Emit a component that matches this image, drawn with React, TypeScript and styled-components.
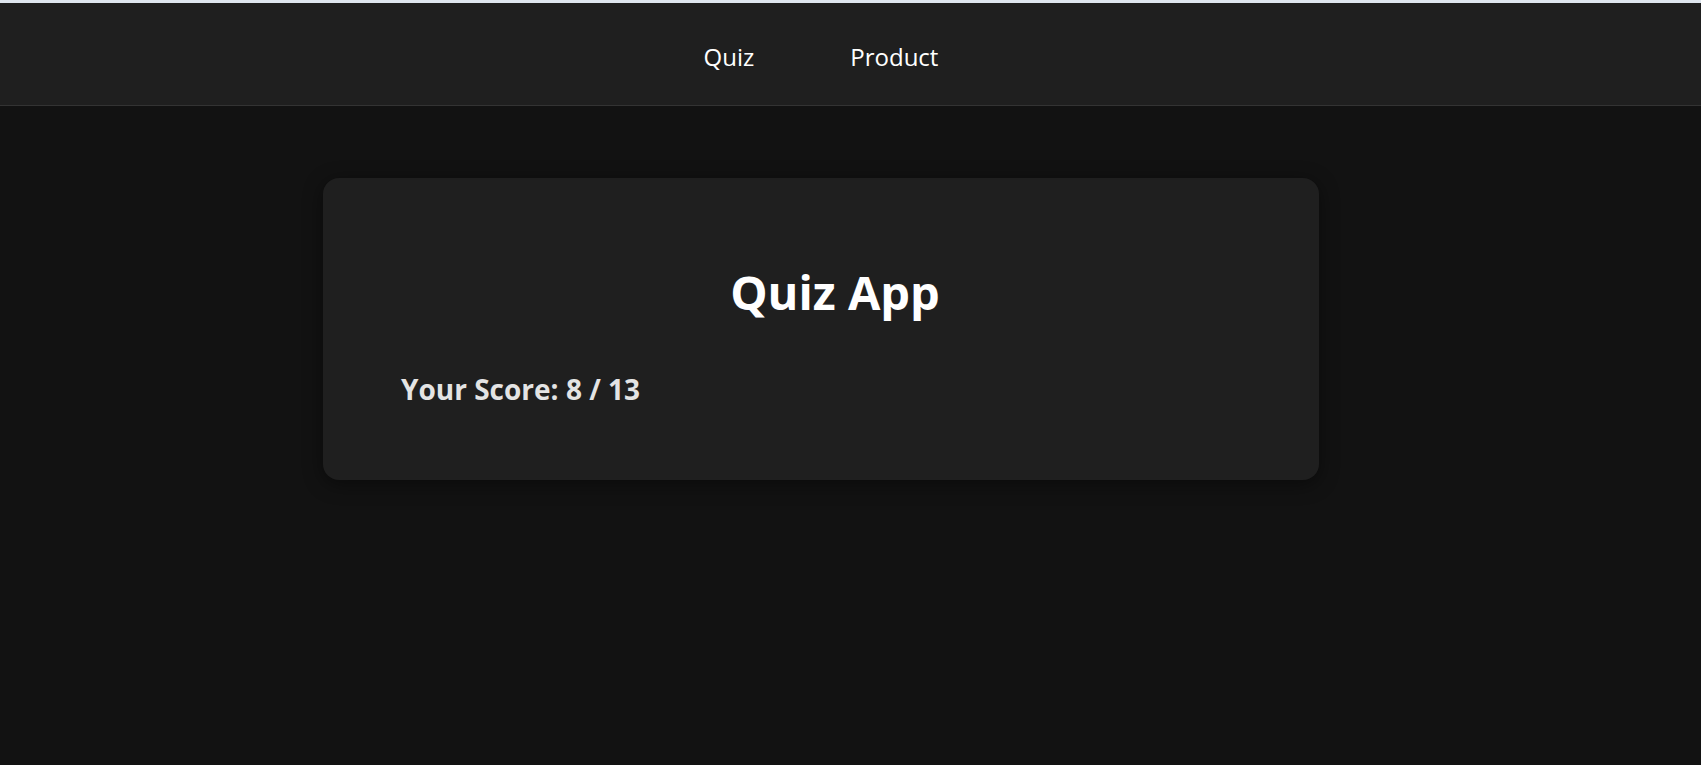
import React from "react";
import styled, { createGlobalStyle } from "styled-components";

const GlobalStyle = createGlobalStyle`
  html, body {
    margin: 0;
    padding: 0;
    background: #121212;
  }
  body {
    font-family: "Open Sans", "Noto Sans", "Liberation Sans", sans-serif;
    color: #ffffff;
  }
`;

const Shell = styled.div`
  min-height: 765px;
  border-top: 3px solid #dfe6ee;
  box-sizing: border-box;
`;

const NavBar = styled.nav`
  height: 103px;
  box-sizing: border-box;
  padding: 4px 59px 0 0;
  background: #1f1f1f;
  border-bottom: 1px solid #333333;
  display: flex;
  justify-content: center;
  align-items: center;
`;

const NavList = styled.ul`
  list-style: none;
  display: flex;
  gap: 96px;
  margin: 0;
  padding: 0;
`;

const NavLink = styled.a`
  color: #ffffff;
  font-size: 24px;
  text-decoration: none;
  cursor: pointer;
`;

const Main = styled.main`
  display: flex;
  justify-content: center;
  padding: 72px 59px 0 0;
`;

const Card = styled.section`
  width: 996px;
  height: 302px;
  box-sizing: border-box;
  background: #1f1f1f;
  border-radius: 16px;
  box-shadow: 0 4px 20px rgba(0, 0, 0, 0.45);
  padding: 82px 78px 0;
`;

const Title = styled.h1`
  margin: 0 0 46px;
  padding-left: 28px;
  text-align: center;
  font-size: 47px;
  font-weight: 700;
  color: #ffffff;
`;

const Score = styled.h3`
  margin: 0;
  font-size: 28px;
  font-weight: 700;
  color: #e4e4e4;
`;

const links = ["Quiz", "Product"];

const App: React.FC = () => {
  const score = 8;
  const total = 13;
  return (
    <>
      <GlobalStyle />
      <Shell>
        <NavBar>
          <NavList>
            {links.map((l) => (
              <li key={l}>
                <NavLink>{l}</NavLink>
              </li>
            ))}
          </NavList>
        </NavBar>
        <Main>
          <Card>
            <Title>Quiz App</Title>
            <Score>
              Your Score: {score} / {total}
            </Score>
          </Card>
        </Main>
      </Shell>
    </>
  );
};

export default App;
